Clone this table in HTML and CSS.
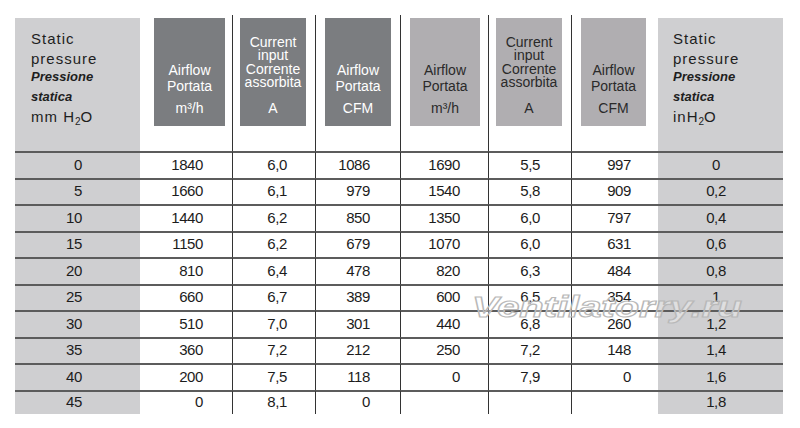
FILE: index.html
```html
<!DOCTYPE html>
<html lang="it">
<head>
<meta charset="utf-8">
<title>Static pressure table</title>
<link rel="stylesheet" href="styles.css">
</head>
<body>
<div class="sheet">
  <div class="grid">
    <div class="hd grey g1">
      <div class="l1">Static</div>
      <div class="l2">pressure</div>
      <div class="l3">Pressione</div>
      <div class="l4">statica</div>
      <div class="l5">mm H<sub>2</sub>O</div>
    </div>
    <div class="hd h2"><div class="box dark w71"><div class="lab">Airflow<br>Portata</div><div class="unit u-a">m³/h</div></div></div>
    <div class="hd v h3"><div class="box dark w66"><div class="lab tight">Current<br>input<br>Corrente<br>assorbita</div><div class="unit u-c">A</div></div></div>
    <div class="hd v h4"><div class="box dark w66"><div class="lab">Airflow<br>Portata</div><div class="unit u-a">CFM</div></div></div>
    <div class="hd v h5"><div class="box light w70"><div class="lab">Airflow<br>Portata</div><div class="unit u-a">m³/h</div></div></div>
    <div class="hd v h6"><div class="box light w66"><div class="lab tight">Current<br>input<br>Corrente<br>assorbita</div><div class="unit u-c">A</div></div></div>
    <div class="hd v h7"><div class="box light w65"><div class="lab">Airflow<br>Portata</div><div class="unit u-a">CFM</div></div></div>
    <div class="hd grey g8">
      <div class="l1">Static</div>
      <div class="l2">pressure</div>
      <div class="l3">Pressione</div>
      <div class="l4">statica</div>
      <div class="l5">inH<sub>2</sub>O</div>
    </div>

    <div class="c c1">0</div><div class="c c2">1840</div><div class="c c3">6,0</div><div class="c c4">1086</div><div class="c c5">1690</div><div class="c c6">5,5</div><div class="c c7">997</div><div class="c c8">0</div>
    <div class="c c1">5</div><div class="c c2">1660</div><div class="c c3">6,1</div><div class="c c4">979</div><div class="c c5">1540</div><div class="c c6">5,8</div><div class="c c7">909</div><div class="c c8">0,2</div>
    <div class="c c1">10</div><div class="c c2">1440</div><div class="c c3">6,2</div><div class="c c4">850</div><div class="c c5">1350</div><div class="c c6">6,0</div><div class="c c7">797</div><div class="c c8">0,4</div>
    <div class="c c1">15</div><div class="c c2">1150</div><div class="c c3">6,2</div><div class="c c4">679</div><div class="c c5">1070</div><div class="c c6">6,0</div><div class="c c7">631</div><div class="c c8">0,6</div>
    <div class="c c1">20</div><div class="c c2">810</div><div class="c c3">6,4</div><div class="c c4">478</div><div class="c c5">820</div><div class="c c6">6,3</div><div class="c c7">484</div><div class="c c8">0,8</div>
    <div class="c c1">25</div><div class="c c2">660</div><div class="c c3">6,7</div><div class="c c4">389</div><div class="c c5">600</div><div class="c c6">6,5</div><div class="c c7">354</div><div class="c c8">1</div>
    <div class="c c1">30</div><div class="c c2">510</div><div class="c c3">7,0</div><div class="c c4">301</div><div class="c c5">440</div><div class="c c6">6,8</div><div class="c c7">260</div><div class="c c8">1,2</div>
    <div class="c c1">35</div><div class="c c2">360</div><div class="c c3">7,2</div><div class="c c4">212</div><div class="c c5">250</div><div class="c c6">7,2</div><div class="c c7">148</div><div class="c c8">1,4</div>
    <div class="c c1">40</div><div class="c c2">200</div><div class="c c3">7,5</div><div class="c c4">118</div><div class="c c5">0</div><div class="c c6">7,9</div><div class="c c7">0</div><div class="c c8">1,6</div>
    <div class="c c1">45</div><div class="c c2">0</div><div class="c c3">8,1</div><div class="c c4">0</div><div class="c c5"></div><div class="c c6"></div><div class="c c7"></div><div class="c c8">1,8</div>
  </div>
  <span class="watermark">Ventilatorry.ru</span>
</div>
</body>
</html>
```

FILE: styles.css
```css
html, body {
  margin: 0;
  padding: 0;
  background: #ffffff;
}

.sheet {
  position: relative;
  width: 800px;
  height: 428px;
  overflow: hidden;
  padding: 15px 0 0 15px;
  box-sizing: border-box;
  font-family: "Liberation Sans", Arial, sans-serif;
  color: #222;
}

.grid {
  display: grid;
  grid-template-columns: 125px 92px 83px 85px 88px 83px 87px 125px;
  grid-template-rows: 136px repeat(9, 26.5px) 24.5px;
  width: 768px;
}

/* header */
.hd {
  box-sizing: border-box;
}
.hd.v {
  border-left: 1px solid #333;
}
.hd.grey {
  margin-top: 3px;
  background: #cfcfd1;
  padding-top: 10.8px;
  font-size: 15px;
  letter-spacing: 1px;
  color: #1e1e1e;
}
.g1 { padding-left: 16px; }
.g8 { padding-left: 15px; }

.l1 { line-height: 20px; }
.l2 { line-height: 19px; }
.l3, .l4 {
  font-size: 13px;
  font-weight: bold;
  font-style: italic;
  letter-spacing: 0;
}
.l3 { line-height: 18px; }
.l4 { line-height: 21px; }
.l5 { line-height: 20px; }
.l5 sub {
  font-size: 10px;
  line-height: 0;
  vertical-align: -3px;
  letter-spacing: 0;
}

.h2 { padding: 3px 0 0 14px; }
.h3 { padding: 3px 0 0 7px; }
.h4 { padding: 3px 0 0 9px; }
.h5 { padding: 3px 0 0 9px; }
.h6 { padding: 3px 0 0 7px; }
.h7 { padding: 3px 0 0 9px; }

.box {
  height: 108px;
  box-sizing: border-box;
  display: flex;
  flex-direction: column;
  justify-content: flex-end;
  align-items: center;
  text-align: center;
  font-size: 14px;
  padding-bottom: 10.4px;
}
.box.dark { background: #7b7d80; color: #ffffff; }
.box.light { background: #b0aeb1; color: #2a2a2a; }
.w71 { width: 71px; }
.w70 { width: 70px; }
.w66 { width: 66px; }
.w65 { width: 65px; }

.lab { line-height: 15.5px; }
.lab.tight { line-height: 13.5px; }
.unit { line-height: 15px; }
.u-a { margin-top: 6.2px; }
.u-c { margin-top: 10.7px; }

/* body cells */
.c {
  box-sizing: border-box;
  border-top: 2px solid #5c5c5c;
  display: flex;
  align-items: center;
  justify-content: flex-end;
  font-size: 15px;
  letter-spacing: -0.4px;
  padding-bottom: 2.5px;
  color: #1c1c1c;
}
.c3, .c4, .c5, .c6, .c7 {
  border-left: 1px solid #333;
}
.c1 { background: #cfcfd1; padding-right: 58px; }
.c2 { padding-right: 29px; }
.c3 { padding-right: 28px; }
.c4 { padding-right: 30px; }
.c5 { padding-right: 28px; }
.c6 { padding-right: 31px; }
.c7 { padding-right: 27px; }
.c8 {
  background: #cfcfd1;
  justify-content: center;
  padding-right: 9px;
}

/* watermark overlay */
.watermark {
  position: absolute;
  left: 472px;
  top: 292px;
  font-family: "Liberation Sans", Arial, sans-serif;
  font-size: 30px;
  line-height: 1;
  font-weight: bold;
  font-style: italic;
  color: rgba(255, 255, 255, 0.35);
  -webkit-text-stroke: 1.2px #b9b9b9;
  transform: scaleX(1.33);
  transform-origin: left top;
  white-space: nowrap;
  pointer-events: none;
}
```
